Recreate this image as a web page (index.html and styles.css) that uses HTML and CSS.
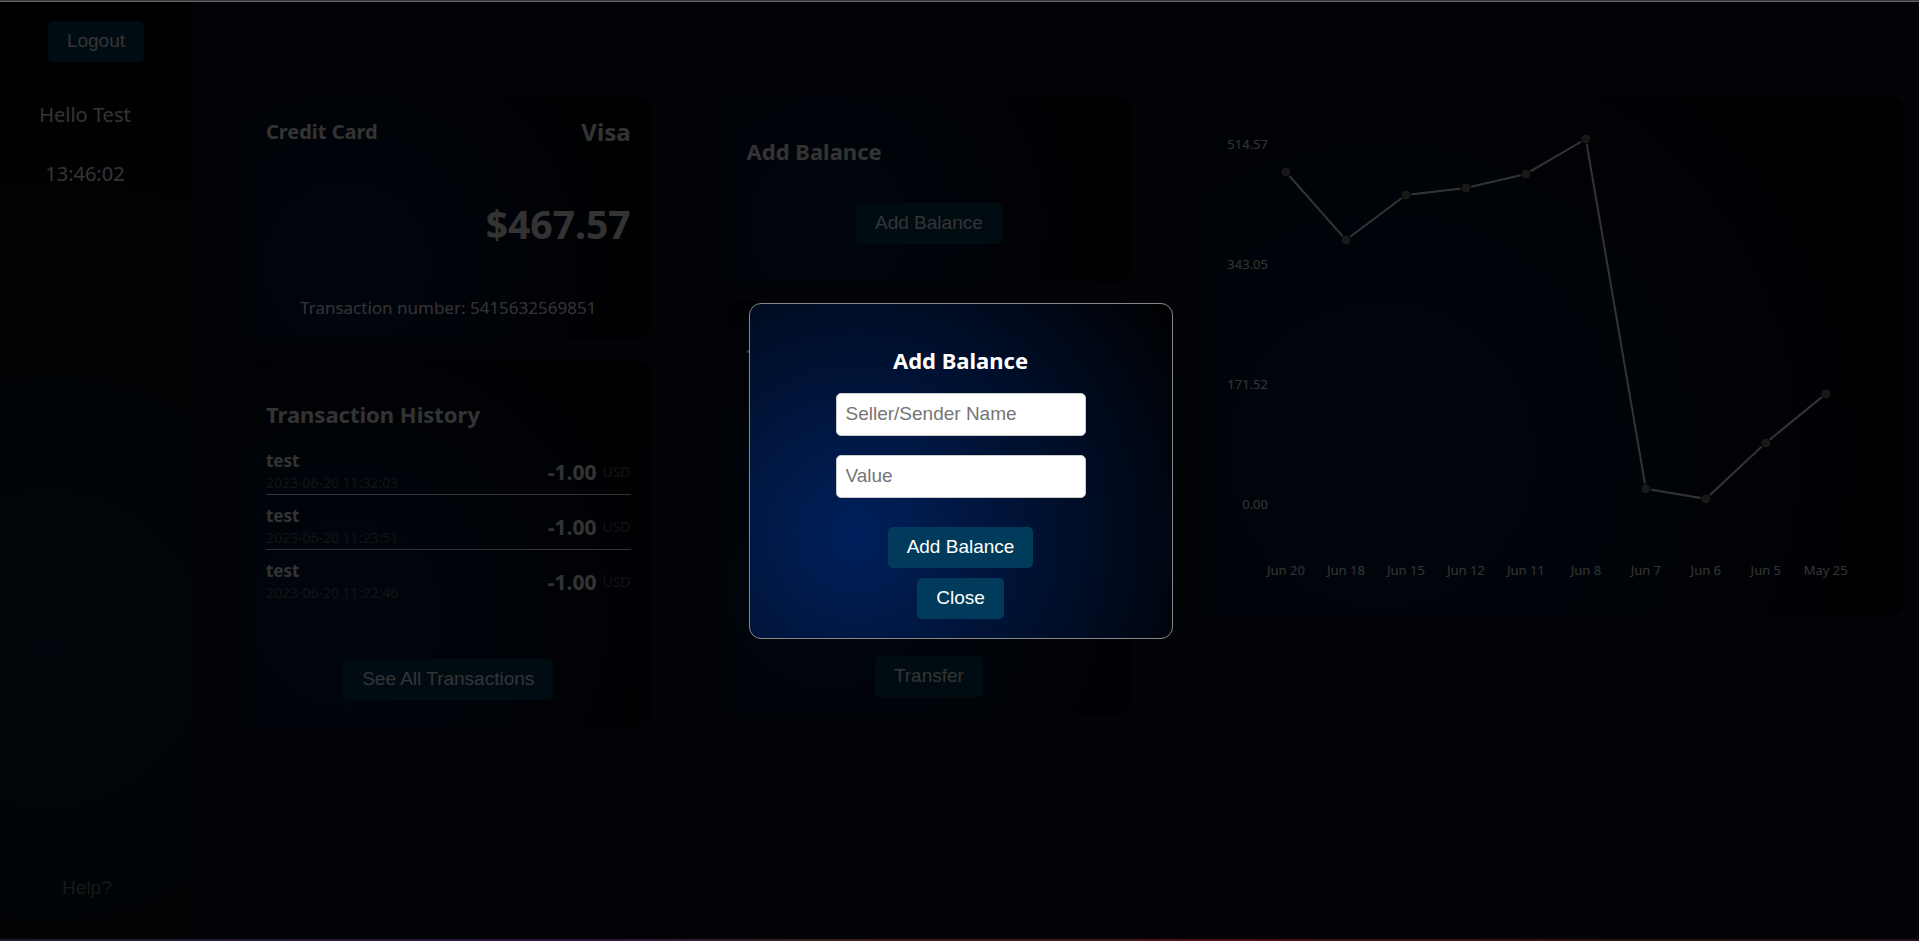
FILE: index.html
```html
<!DOCTYPE html>
<html lang="en">
<head>
<meta charset="utf-8">
<title>Dashboard</title>
<link rel="stylesheet" href="styles.css">
</head>
<body>
<div class="edge edge-top"></div>
<div class="app">
  <aside class="sidebar">
    <button class="btn" type="button">Logout</button>
    <div class="sidebar-info">
      <p class="greeting">Hello Test</p>
      <p class="clock">13:46:02</p>
    </div>
    <a class="help" href="#">Help?</a>
  </aside>

  <main class="main">
    <div class="column">
      <section class="card credit">
        <div class="credit-head">
          <h3 class="credit-title">Credit Card</h3>
          <strong class="credit-brand">Visa</strong>
        </div>
        <p class="amount">$467.57</p>
        <p class="number">Transaction number: 5415632569851</p>
      </section>
      <section class="card history">
        <h2 class="card-title">Transaction History</h2>
        <ul class="list">
          <li class="row">
            <div><p class="name">test</p><p class="date">2023-06-20 11:32:03</p></div>
            <div class="sum"><b class="value">-1.00</b><span class="currency">USD</span></div>
          </li>
          <li class="row">
            <div><p class="name">test</p><p class="date">2023-06-20 11:23:51</p></div>
            <div class="sum"><b class="value">-1.00</b><span class="currency">USD</span></div>
          </li>
          <li class="row">
            <div><p class="name">test</p><p class="date">2023-06-20 11:22:46</p></div>
            <div class="sum"><b class="value">-1.00</b><span class="currency">USD</span></div>
          </li>
        </ul>
        <button class="btn" type="button">See All Transactions</button>
      </section>
    </div>

    <div class="column">
      <section class="card">
        <h2 class="card-title">Add Balance</h2>
        <button class="btn" type="button">Add Balance</button>
      </section>
      <section class="card transfer">
        <h2 class="card-title">Transfer</h2>
        <form class="form">
          <input class="field" type="text" aria-label="Recipient">
          <input class="field" type="text" aria-label="Card number">
          <input class="field" type="text" aria-label="Amount">
          <input class="field" type="text" aria-label="Note">
        </form>
        <button class="btn" type="button">Transfer</button>
      </section>
    </div>

    <div class="column">
      <section class="card chart-card">
        <svg class="chart" viewBox="0 0 698 518" role="img" aria-label="Balance by day">
          <g class="axis axis-y">
            <text x="61" y="53">514.57</text>
            <text x="61" y="173">343.05</text>
            <text x="61" y="293">171.52</text>
            <text x="61" y="413">0.00</text>
          </g>
          <g class="axis axis-x">
            <text x="79" y="479">Jun 20</text>
            <text x="139" y="479">Jun 18</text>
            <text x="199" y="479">Jun 15</text>
            <text x="259" y="479">Jun 12</text>
            <text x="319" y="479">Jun 11</text>
            <text x="379" y="479">Jun 8</text>
            <text x="439" y="479">Jun 7</text>
            <text x="499" y="479">Jun 6</text>
            <text x="559" y="479">Jun 5</text>
            <text x="619" y="479">May 25</text>
          </g>
          <polyline class="line" points="79,76 139,144 199,99 259,92 319,78 379,43 439,393 499,403 559,347 619,298"/>
          <g class="dots">
            <circle cx="79" cy="76" r="5"/><circle cx="139" cy="144" r="5"/>
            <circle cx="199" cy="99" r="5"/><circle cx="259" cy="92" r="5"/>
            <circle cx="319" cy="78" r="5"/><circle cx="379" cy="43" r="5"/>
            <circle cx="439" cy="393" r="5"/><circle cx="499" cy="403" r="5"/>
            <circle cx="559" cy="347" r="5"/><circle cx="619" cy="298" r="5"/>
          </g>
        </svg>
      </section>
    </div>
  </main>

  <div class="overlay">
    <form class="modal" role="dialog" aria-labelledby="modal-title">
      <h2 class="modal-title" id="modal-title">Add Balance</h2>
      <div class="form">
        <input class="field" type="text" placeholder="Seller/Sender Name" aria-label="Seller/Sender Name">
        <input class="field" type="text" placeholder="Value" aria-label="Value">
      </div>
      <div class="modal-actions">
        <button class="btn" type="button">Add Balance</button>
        <button class="btn" type="button">Close</button>
      </div>
    </form>
  </div>
</div>
<div class="edge edge-bottom"></div>
</body>
</html>
```
FILE: styles.css
```css
* { box-sizing: border-box; }

body {
  margin: 0;
  min-height: 100vh;
  display: flex;
  flex-direction: column;
  background: #0a0f20;
  color: #fff;
  font-family: "Segoe UI", "Noto Sans", "Open Sans", sans-serif;
}

h2, h3, p, ul { margin: 0; padding: 0; }

.edge { height: 2px; flex: none; }
.edge-top { background: linear-gradient(#38383e 50%, #626268 50%); }
.edge-bottom { background: linear-gradient(90deg, #21182e, #2a1640 30%, #3a2020 42%, #48121a 64%, #2c140e 85%, #241420); }

.app { position: relative; flex: 1; display: flex; }

.sidebar {
  width: 10%;
  padding: 19px 0 40px;
  display: flex;
  flex-direction: column;
  align-items: center;
  background: radial-gradient(circle at 24% 69%, #0c1a38 0%, #0a1a28 20%, #000 100%);
}
.sidebar-info { padding-right: 22px; margin-top: 37px; text-align: center; font-size: 20px; line-height: 31px; }
.clock { margin-top: 28px; }
.help {
  margin-top: auto;
  padding-right: 18px;
  color: #777;
  font: 19px/22px "Liberation Sans", Arial, sans-serif;
  text-decoration: none;
}

.main {
  flex: 1;
  display: grid;
  grid-template-columns: 29fr 29fr 50fr;
  column-gap: 76px;
  align-items: start;
  padding: 94px 14px 0 54px;
}
.column { display: grid; gap: 19px; min-width: 0; }

.card {
  display: flex;
  flex-direction: column;
  padding: 39px 20px 38px;
  border-radius: 16px;
  background: radial-gradient(circle at 25% 69%, #001c48 0%, #000 100%);
}
.card > .btn { align-self: center; }
.card-title { font-size: 22px; line-height: 32px; margin-bottom: 36px; }

.btn {
  border: 0;
  border-radius: 5px;
  padding: 9px 19px 11px;
  background: #003b5c;
  color: #fff;
  font: 19px/21px "Liberation Sans", Arial, sans-serif;
}

.credit { padding: 20px; }
.credit-head { display: flex; justify-content: space-between; align-items: center; line-height: 32px; }
.credit-title { font-size: 20px; }
.credit-brand { font-size: 24px; }
.amount { margin-top: 48px; font-size: 39px; line-height: 56px; font-weight: 700; text-align: right; }
.number { margin-top: 44px; font-size: 17px; line-height: 24px; text-align: center; }

.history { padding-bottom: 28px; }
.history .card-title { margin-bottom: 10px; }
.list { list-style: none; margin-bottom: 54px; }
.row { display: flex; justify-content: space-between; align-items: center; height: 55px; border-bottom: 1px solid #fff; }
.row:last-child { border-bottom-color: transparent; }
.row > div:first-child { padding-top: 9px; }
.name { font-size: 17px; line-height: 23px; font-weight: 700; }
.date { font-size: 14px; line-height: 22px; color: #606060; }
.sum { display: flex; align-items: center; gap: 6px; padding-top: 10px; }
.value { font-size: 21px; line-height: 28px; }
.currency { font-size: 14px; line-height: 28px; color: #606060; }

.form { display: flex; flex-direction: column; align-items: center; gap: 19px; }
.field {
  width: 250px;
  height: 43px;
  padding: 0 9px;
  border: 1px solid #ccc;
  border-radius: 5px;
  background: #fff;
  font: 19px "Liberation Sans", Arial, sans-serif;
}
.field::placeholder { color: #757575; }
.transfer { padding-bottom: 20px; }
.transfer .form { margin: -15px 0 34px; }

.chart-card { padding: 0 0 2px; }
.chart { display: block; width: 100%; }
.axis { fill: #fff; font-size: 13px; }
.axis-y { text-anchor: end; }
.axis-x { text-anchor: middle; }
.line { fill: none; stroke: #fff; stroke-width: 2; }
.dots { fill: #777; stroke: #000; stroke-width: 1; }

.overlay {
  position: absolute;
  inset: 0;
  display: flex;
  align-items: center;
  justify-content: center;
  padding-left: 2px;
  background: rgba(0, 0, 0, .8);
}
.modal {
  width: 424px;
  padding: 40px 20px 19px;
  border: 1px solid #888;
  border-radius: 12px;
  background: radial-gradient(circle at 25% 69%, #00205c 0%, #000 100%);
}
.modal-title { margin-bottom: 17px; font-size: 22px; line-height: 32px; text-align: center; }
.modal-actions { display: flex; flex-direction: column; align-items: center; gap: 10px; margin-top: 29px; }
```
